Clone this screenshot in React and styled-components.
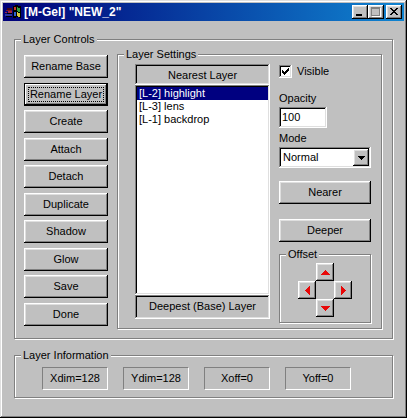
import { useState } from "react";
import styled, { createGlobalStyle } from "styled-components";

const ACTIONS = [
  "Rename Base",
  "Rename Layer",
  "Create",
  "Attach",
  "Detach",
  "Duplicate",
  "Shadow",
  "Glow",
  "Save",
  "Done",
];

const LAYERS = ["[L-2] highlight", "[L-3] lens", "[L-1] backdrop"];

const INFO = ["Xdim=128", "Ydim=128", "Xoff=0", "Yoff=0"];

const OFFSETS = [
  { side: "up", label: "Offset up", d: "M4 0h1v1h1v1h1v1h1v1h1v1H0V4h1V3h1V2h1V1h1z" },
  { side: "left", label: "Offset left", d: "M4 0h1v9H4V8H3V7H2V6H1V5H0V4h1V3h1V2h1V1h1z" },
  { side: "right", label: "Offset right", d: "M0 0h1v1h1v1h1v1h1v1h1v1H4v1H3v1H2v1H1v1H0z" },
  { side: "down", label: "Offset down", d: "M0 0h9v1H8v1H7v1H6v1H5v1H4V4H3V3H2V2H1V1H0z" },
];

export default function App() {
  const [active, setActive] = useState("Rename Layer");
  const [layer, setLayer] = useState(LAYERS[0]);
  const [visible, setVisible] = useState(true);
  const [opacity, setOpacity] = useState("100");
  const [mode, setMode] = useState("Normal");

  return (
    <>
      <GlobalStyle />
      <Window>
        <TitleBar>
          <WindowsFlag />
          <Title>[M-Gel] "NEW_2"</Title>
          <CaptionGroup>
            <CaptionButton aria-label="Minimize">
              <svg width="12" height="10" shapeRendering="crispEdges">
                <path d="M2 7h6v2H2z" fill="#000" />
              </svg>
            </CaptionButton>
            <CaptionButton aria-label="Maximize" disabled>
              <svg width="12" height="10" shapeRendering="crispEdges">
                <path d="M2 1h9v9H2z" fill="#fff" />
                <path d="M1 0h9v9H1z" fill="#808080" />
                <path d="M2 2h7v6H2z" fill="#c0c0c0" />
              </svg>
            </CaptionButton>
          </CaptionGroup>
          <CaptionButton aria-label="Close">
            <svg width="12" height="10" shapeRendering="crispEdges">
              <path
                d="M2 1h2v1h1v1h2V2h1V1h2v1H9v1H8v1H7v1h1v1h1v1h1v1H8V7H7V6H5v1H4v1H2V7h1V6h1V5h1V4H4V3H3V2H2z"
                fill="#000"
              />
            </svg>
          </CaptionButton>
        </TitleBar>

        <Content>
          <Group>
            <Legend>Layer Controls</Legend>
            <Controls>
              <Actions>
                {ACTIONS.map((name) => (
                  <Button
                    key={name}
                    $active={name === active}
                    onClick={() => setActive(name)}
                  >
                    {name}
                  </Button>
                ))}
              </Actions>

              <Settings>
                <Legend>Layer Settings</Legend>
                <SettingsBody>
                  <Stack>
                    <StackCaption>Nearest Layer</StackCaption>
                    <LayerList
                      size={3}
                      aria-label="Layers"
                      value={layer}
                      onChange={(e) => setLayer(e.target.value)}
                    >
                      {LAYERS.map((name) => (
                        <option key={name}>{name}</option>
                      ))}
                    </LayerList>
                    <StackCaption $tall>Deepest (Base) Layer</StackCaption>
                  </Stack>

                  <Options>
                    <CheckLabel>
                      <CheckBox
                        type="checkbox"
                        checked={visible}
                        onChange={(e) => setVisible(e.target.checked)}
                      />
                      <CheckMark viewBox="0 0 7 7" shapeRendering="crispEdges">
                        {visible && (
                          <path d="M0 2h1v1h1v1h1V3h1V2h1V1h1V0h1v3H6v1H5v1H4v1H3v1H2V6H1V5H0z" />
                        )}
                      </CheckMark>
                      Visible
                    </CheckLabel>
                    <Field>
                      <label htmlFor="opacity">Opacity</label>
                      <TextBox
                        id="opacity"
                        value={opacity}
                        onChange={(e) => setOpacity(e.target.value)}
                      />
                    </Field>
                    <Field>
                      <label htmlFor="mode">Mode</label>
                      <ComboBox>
                        <Select
                          id="mode"
                          value={mode}
                          onChange={(e) => setMode(e.target.value)}
                        >
                          <option>Normal</option>
                          <option>Multiply</option>
                          <option>Screen</option>
                        </Select>
                        <ComboArrow>
                          <svg width="7" height="4" shapeRendering="crispEdges">
                            <path d="M0 0h7v1H6v1H5v1H4v1H3V3H2V2H1V1H0z" />
                          </svg>
                        </ComboArrow>
                      </ComboBox>
                    </Field>
                    <MoveButtons>
                      <Button>Nearer</Button>
                      <Button>Deeper</Button>
                    </MoveButtons>
                    <Group>
                      <Legend>Offset</Legend>
                      <Pad>
                        {OFFSETS.map(({ side, label, d }) => (
                          <PadButton key={side} $side={side} aria-label={label}>
                            <svg
                              width={side === "left" || side === "right" ? 5 : 9}
                              height={side === "left" || side === "right" ? 9 : 5}
                              shapeRendering="crispEdges"
                            >
                              <path d={d} fill="#e80808" />
                            </svg>
                          </PadButton>
                        ))}
                      </Pad>
                    </Group>
                  </Options>
                </SettingsBody>
              </Settings>
            </Controls>
          </Group>

          <Group>
            <Legend>Layer Information</Legend>
            <InfoRow>
              {INFO.map((text) => (
                <InfoCell key={text}>{text}</InfoCell>
              ))}
            </InfoRow>
          </Group>
        </Content>
      </Window>
    </>
  );
}

function WindowsFlag() {
  return (
    <svg width="16" height="14" shapeRendering="crispEdges" aria-hidden="true">
      <path d="M8 1h2V0h3v1h3v12h-2v-1h-3v1H8z" fill="#000" />
      <path d="M9 2h2v3H9z" fill="#c83828" />
      <path d="M12 2h1v1h2v4h-2V6h-1z" fill="#30a040" />
      <path d="M9 7h2v4H9z" fill="#3060d0" />
      <path d="M12 7h1v1h2v4h-2v-1h-1z" fill="#d8c840" />
      <path d="M2 3h5v2H2z" fill="#400818" />
      <path d="M1 5h6v1H1z" fill="#801828" />
      <path d="M0 7h2v1H0zM3 6h4v2H3z" fill="#a02848" />
      <path d="M0 9h7v2H0z" fill="#3038a0" />
      <path d="M2 8h5v1H2zM1 11h6v1H1z" fill="#000" />
    </svg>
  );
}

const GlobalStyle = createGlobalStyle`
  * {
    box-sizing: border-box;
  }

  body {
    margin: 0;
    background: #c0c0c0;
  }

  body,
  button,
  input,
  select {
    font-family: "Liberation Sans", Arial, sans-serif;
    font-size: 11px;
    line-height: 13px;
    color: #000;
  }
`;

const Window = styled.main`
  min-height: 100vh;
  padding: 3px;
  background: #c0c0c0;
  box-shadow: inset -1px -1px 0 #000, inset 1px 1px 0 #dfdfdf,
    inset -2px -2px 0 #808080, inset 2px 2px 0 #fff;
`;

const TitleBar = styled.header`
  display: flex;
  align-items: center;
  height: 18px;
  padding: 0 2px;
  background: linear-gradient(90deg, #000078, #1084d0);
`;

const Title = styled.h1`
  flex: 1;
  margin: 0 0 0 3px;
  font-size: 12px;
  line-height: 16px;
  color: #fff;
`;

const CaptionGroup = styled.div`
  display: flex;
  margin-right: 2px;
`;

const raised = `
  border: none;
  background: #c0c0c0;
  box-shadow: inset -1px -1px 0 #000, inset 1px 1px 0 #fff,
    inset -2px -2px 0 #808080, inset 2px 2px 0 #dfdfdf;
`;

const sunken = `
  border: none;
  box-shadow: inset -1px -1px 0 #fff, inset 1px 1px 0 #808080,
    inset -2px -2px 0 #dfdfdf, inset 2px 2px 0 #000;
`;

const CaptionButton = styled.button`
  ${raised}
  width: 16px;
  height: 14px;
  padding: 2px;

  svg {
    display: block;
  }
`;

const Content = styled.div`
  display: flex;
  flex-direction: column;
  gap: 10px;
  padding: 12px 11px;
`;

const Group = styled.fieldset`
  min-width: 0;
  margin: 0;
  padding: 0;
  border: 1px solid #808080;
  box-shadow: 1px 1px 0 #fff, inset 1px 1px 0 #fff;
`;

const Legend = styled.legend`
  margin-left: 6px;
  padding: 0 2px;
  background: #c0c0c0;
`;

const Controls = styled.div`
  display: flex;
  gap: 9px;
  padding: 2px 10px 9px 9px;
`;

const Actions = styled.div`
  display: flex;
  flex-direction: column;
  justify-content: space-between;
  width: 84px;
  padding: 7px 0 3px;
`;

const Button = styled.button`
  ${raised}
  height: 23px;
  padding: 0;

  ${({ $active }) =>
    $active &&
    `
    box-shadow: inset 0 0 0 1px #000, inset -2px -2px 0 #000,
      inset 2px 2px 0 #fff, inset -3px -3px 0 #808080;
    outline: 1px dotted #000;
    outline-offset: -5px;
  `}
`;

const Settings = styled(Group)`
  flex: 1;
`;

const SettingsBody = styled.div`
  display: flex;
  gap: 9px;
  padding: 3px 10px 5px 17px;
`;

const Stack = styled.div`
  flex: 1;
  display: flex;
  flex-direction: column;
  padding-bottom: 4px;
`;

const StackCaption = styled.div`
  ${sunken}
  height: ${({ $tall }) => ($tall ? 24 : 21)}px;
  padding: 5px 0;
  text-align: center;
`;

const LayerList = styled.select`
  ${sunken}
  flex: 1;
  padding: 2px;
  border-radius: 0;
  background: #fff;
  outline: none;
  overflow: hidden;

  option {
    height: 13px;
    min-height: 13px;
    padding: 0 2px;
    line-height: 13px;
  }

  option:checked {
    background: linear-gradient(#000080, #000080);
    color: #fff;
    -webkit-text-fill-color: #fff;
  }
`;

const Options = styled.div`
  display: flex;
  flex-direction: column;
  width: 92px;
`;

const CheckLabel = styled.label`
  display: grid;
  grid-template-columns: 13px auto;
  column-gap: 5px;
  align-items: center;
  padding-top: 1px;
`;

const CheckBox = styled.input`
  ${sunken}
  grid-area: 1 / 1;
  appearance: none;
  width: 13px;
  height: 13px;
  margin: 0;
  background: #fff;
`;

const CheckMark = styled.svg`
  grid-area: 1 / 1;
  justify-self: center;
  width: 7px;
  height: 7px;
  pointer-events: none;
`;

const Field = styled.div`
  display: flex;
  flex-direction: column;
  gap: 2px;
  margin-top: 14px;

  & + & {
    margin-top: 4px;
  }
`;

const TextBox = styled.input`
  ${sunken}
  width: 48px;
  height: 21px;
  padding: 0 3px 2px;
  background: #fff;
`;

const ComboBox = styled.div`
  ${sunken}
  display: grid;
  grid-template-columns: 1fr 16px;
  height: 21px;
  padding: 2px;
  background: #fff;
`;

const Select = styled.select`
  grid-area: 1 / 1 / 2 / 3;
  appearance: none;
  padding: 0 18px 0 2px;
  border: none;
  background: transparent;
`;

const ComboArrow = styled.span`
  ${raised}
  grid-area: 1 / 2;
  display: flex;
  align-items: center;
  justify-content: center;
  pointer-events: none;
`;

const MoveButtons = styled.div`
  display: flex;
  flex-direction: column;
  gap: 15px;
  margin: 13px 0 6px;
`;

const Pad = styled.div`
  display: grid;
  grid-template: repeat(3, 18px) / repeat(3, 18px);
  grid-template-areas: ". up ." "left . right" ". down .";
  justify-content: center;
  padding: 2px 0 5px;
`;

const PadButton = styled.button`
  ${raised}
  grid-area: ${({ $side }) => $side};
  display: flex;
  align-items: center;
  justify-content: center;
  padding: 0;
`;

const InfoRow = styled.div`
  display: flex;
  gap: 15px;
  padding: 5px 27px 7px;
`;

const InfoCell = styled.div`
  width: 66px;
  padding: 4px 0;
  border: 1px solid;
  border-color: #808080 #fff #fff #808080;
  text-align: center;
`;
